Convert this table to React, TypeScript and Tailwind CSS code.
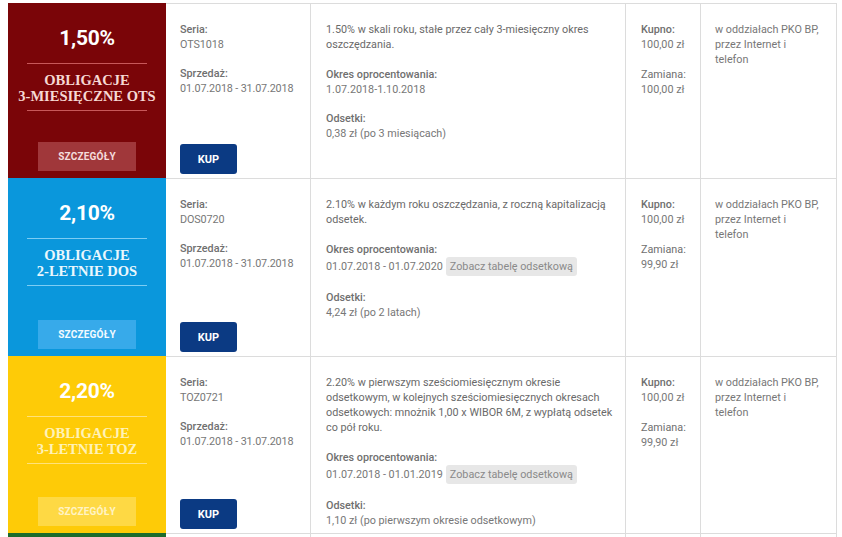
import React from "react";

type Row = {
  rate: string;
  l1: string;
  l2: string;
  bg: string;
  head: string;
  line: string;
  btn: string;
  btnText: string;
  seria: string;
  desc: string;
  okres: string;
  badge: boolean;
  odsetki: string;
  zamiana: string;
  h: string;
};

const rows: Row[] = [
  {
    rate: "1,50%",
    l1: "OBLIGACJE",
    l2: "3-MIESIĘCZNE OTS",
    bg: "bg-[#7a0508]",
    head: "text-[#f6d9d4]",
    line: "bg-[#c8585a]",
    btn: "bg-[#a0373a]",
    btnText: "text-[#f5dcdc]",
    seria: "OTS1018",
    desc: "1.50% w skali roku, stałe przez cały 3-miesięczny okres oszczędzania.",
    okres: "1.07.2018-1.10.2018",
    badge: false,
    odsetki: "0,38 zł (po 3 miesiącach)",
    zamiana: "100,00 zł",
    h: "h-[175px]",
  },
  {
    rate: "2,10%",
    l1: "OBLIGACJE",
    l2: "2-LETNIE DOS",
    bg: "bg-[#0a97dc]",
    head: "text-[#eaf7fd]",
    line: "bg-[#7dcdf3]",
    btn: "bg-[#37aaea]",
    btnText: "text-[#f2faff]",
    seria: "DOS0720",
    desc: "2.10% w każdym roku oszczędzania, z roczną kapitalizacją odsetek.",
    okres: "01.07.2018 - 01.07.2020",
    badge: true,
    odsetki: "4,24 zł (po 2 latach)",
    zamiana: "99,90 zł",
    h: "h-[178px]",
  },
  {
    rate: "2,20%",
    l1: "OBLIGACJE",
    l2: "3-LETNIE TOZ",
    bg: "bg-[#fecb07]",
    head: "text-[#fff2b8]",
    line: "bg-[#ffe27a]",
    btn: "bg-[#fed944]",
    btnText: "text-[#fff3c4]",
    seria: "TOZ0721",
    desc: "2.20% w pierwszym sześciomiesięcznym okresie odsetkowym, w kolejnych sześciomiesięcznych okresach odsetkowych: mnożnik 1,00 x WIBOR 6M, z wypłatą odsetek co pół roku.",
    okres: "01.07.2018 - 01.01.2019",
    badge: true,
    odsetki: "1,10 zł (po pierwszym okresie odsetkowym)",
    zamiana: "99,90 zł",
    h: "h-[177px]",
  },
];

const cell = "border-t border-r border-[#dcdcdc]";

export default function App() {
  return (
    <div
      className="w-[842px] h-[537px] overflow-hidden bg-white pt-[3px] pl-[8px] text-[10.8px] leading-[15px] text-[#777]"
      style={{ fontFamily: "Roboto, 'Liberation Sans', sans-serif" }}
    >
      {rows.map((r) => (
        <div key={r.seria} className={`flex ${r.h}`}>
          <div className={`w-[158px] shrink-0 ${r.bg} flex flex-col items-center pt-[22px]`}>
            <div className="text-[21px] leading-[26px] font-bold text-white tracking-[-0.3px]">{r.rate}</div>
            <div className={`mt-[12px] h-px w-[120px] ${r.line}`} />
            <div
              className={`pt-[8px] text-center text-[14.5px] leading-[16px] font-bold ${r.head}`}
              style={{ fontFamily: "'Liberation Serif', 'Times New Roman', serif" }}
            >
              <div>{r.l1}</div>
              <div>{r.l2}</div>
            </div>
            <div className={`mt-[6px] h-px w-[120px] ${r.line}`} />
            <div
              className={`mt-auto mb-[7px] w-[98px] h-[29px] flex items-center justify-center text-[10px] font-bold tracking-[0.2px] ${r.btn} ${r.btnText}`}
            >
              SZCZEGÓŁY
            </div>
          </div>
          <div className={`w-[145px] shrink-0 ${cell} flex flex-col pl-[14px] pt-[18px]`}>
            <div className="font-medium text-[#6f6f6f]">Seria:</div>
            <div className="tracking-[-0.1px]">{r.seria}</div>
            <div className="mt-[14px] font-medium text-[#6f6f6f]">Sprzedaż:</div>
            <div className="tracking-[-0.15px]">01.07.2018 - 31.07.2018</div>
            <div className="mt-auto mb-[4px] w-[57px] h-[30px] rounded-[3px] bg-[#0b3a83] text-white font-bold text-[11px] flex items-center justify-center">
              KUP
            </div>
          </div>
          <div className={`w-[315px] shrink-0 ${cell} pl-[15px] pr-[11px] pt-[18px]`}>
            <div className="text-[#6a6a6a]">{r.desc}</div>
            <div className="mt-[15px] font-medium text-[#6f6f6f]">Okres oprocentowania:</div>
            <div className="flex items-center">
              <span>{r.okres}</span>
              {r.badge && (
                <span className="ml-[3px] rounded-[3px] bg-[#e7e7e7] px-[4px] leading-[19px] text-[#8a8a8a]">
                  Zobacz tabelę odsetkową
                </span>
              )}
            </div>
            <div className="mt-[14px] font-medium text-[#6f6f6f]">Odsetki:</div>
            <div>{r.odsetki}</div>
          </div>
          <div className={`w-[75px] shrink-0 ${cell} pl-[15px] pt-[18px]`}>
            <div className="font-medium text-[#6f6f6f]">Kupno:</div>
            <div>100,00 zł</div>
            <div className="mt-[15px] text-[#6f6f6f]">Zamiana:</div>
            <div>{r.zamiana}</div>
          </div>
          <div className={`w-[136px] shrink-0 ${cell} pl-[14px] pr-[14px] pt-[18px]`}>
            w oddziałach PKO BP, przez Internet i telefon
          </div>
        </div>
      ))}
      <div className="flex h-[20px]">
        <div className="w-[158px] shrink-0 bg-[#1c6b2c]" />
        <div className={`w-[145px] shrink-0 ${cell}`} />
        <div className={`w-[315px] shrink-0 ${cell}`} />
        <div className={`w-[75px] shrink-0 ${cell}`} />
        <div className={`w-[136px] shrink-0 ${cell}`} />
      </div>
    </div>
  );
}
